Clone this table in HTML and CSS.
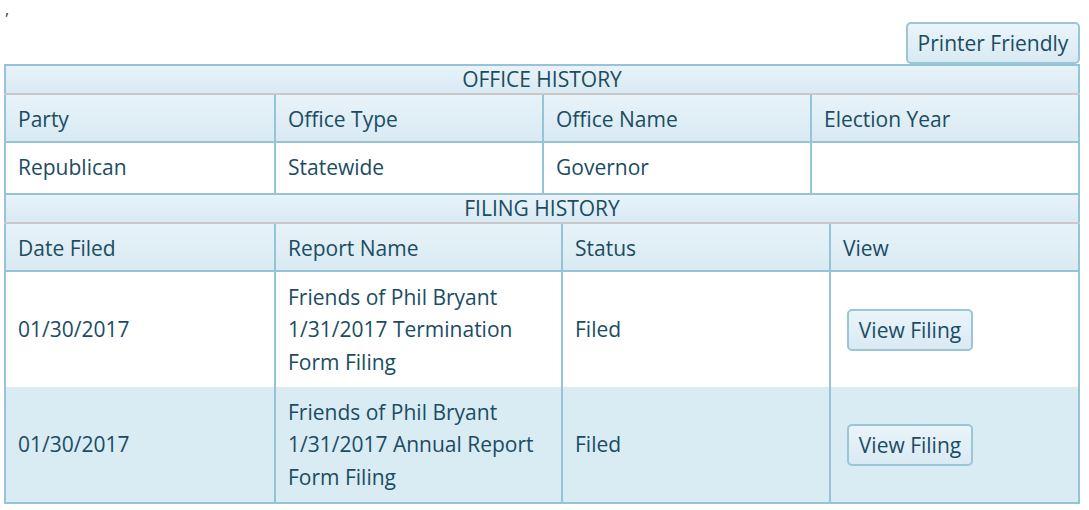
FILE: index.html
```html
<!DOCTYPE html>
<html>
<head>
<meta charset="utf-8">
<link rel="stylesheet" href="styles.css">
</head>
<body>
<div class="page">
  <div class="comma">,</div>
  <div class="toolbar">
    <button class="btn btn-print">Printer Friendly</button>
  </div>
  <table class="grid office">
    <colgroup>
      <col class="c1"><col class="c2"><col class="c3"><col class="c4">
    </colgroup>
    <thead>
      <tr><th class="title" colspan="4">OFFICE HISTORY</th></tr>
      <tr class="head">
        <th>Party</th><th>Office Type</th><th>Office Name</th><th>Election Year</th>
      </tr>
    </thead>
    <tbody>
      <tr class="row">
        <td>Republican</td><td>Statewide</td><td>Governor</td><td></td>
      </tr>
    </tbody>
  </table>
  <table class="grid filing">
    <colgroup>
      <col class="f1"><col class="f2"><col class="f3"><col class="f4">
    </colgroup>
    <thead>
      <tr><th class="title" colspan="4">FILING HISTORY</th></tr>
      <tr class="head">
        <th>Date Filed</th><th>Report Name</th><th>Status</th><th>View</th>
      </tr>
    </thead>
    <tbody>
      <tr class="row tall">
        <td>01/30/2017</td>
        <td>Friends of Phil Bryant<br>1/31/2017 Termination<br>Form Filing</td>
        <td>Filed</td>
        <td><button class="btn btn-view">View Filing</button></td>
      </tr>
      <tr class="row tall alt">
        <td>01/30/2017</td>
        <td>Friends of Phil Bryant<br>1/31/2017 Annual Report<br>Form Filing</td>
        <td>Filed</td>
        <td><button class="btn btn-view">View Filing</button></td>
      </tr>
    </tbody>
  </table>
</div>
</body>
</html>
```
FILE: styles.css
```css
html, body {
  margin: 0;
  padding: 0;
  background: #ffffff;
}

body {
  font-family: "Open Sans", "DejaVu Sans", sans-serif;
  color: #1b4c63;
}

.page {
  padding: 0 9px 0 4px;
}

.comma {
  font-size: 16px;
  line-height: 18px;
  height: 20px;
  padding-left: 1px;
}

.toolbar {
  display: flex;
  justify-content: flex-end;
  margin-top: 2px;
}

.btn {
  font-family: "Open Sans", "DejaVu Sans", sans-serif;
  color: #1b4c63;
  font-size: 21px;
  line-height: 28px;
  background: linear-gradient(#eaf4fa, #d9eaf3);
  border: 2px solid #9cc5d7;
  border-radius: 5px;
  padding: 4px 8px;
  margin: 0;
  cursor: pointer;
  white-space: nowrap;
}

.btn-print {
  width: 174px;
  height: 42px;
}

.btn-view {
  width: 126px;
  height: 42px;
  margin-left: 4px;
}

.grid {
  width: 100%;
  border-collapse: collapse;
  table-layout: fixed;
  font-size: 21px;
  border: 2px solid #94c4d6;
}

.filing {
  border-top: none;
}

.grid th,
.grid td {
  text-align: left;
  font-weight: normal;
  padding: 0 12px;
  vertical-align: middle;
}

.grid .title {
  text-align: center;
  height: 27px;
  line-height: 27px;
  padding: 0;
  background: linear-gradient(#e8f3f9, #d9eaf3);
  border-bottom: 2px solid #c9c9c9;
}

.head th {
  height: 44px;
  padding-top: 2px;
  line-height: 28px;
  background: linear-gradient(#e8f3f9, #d9eaf3);
  border-left: 2px solid #94c4d6;
  border-bottom: 2px solid #94c4d6;
}

.row td {
  height: 48px;
  line-height: 28px;
  border-left: 2px solid #94c4d6;
  background: #ffffff;
}

.office .row td {
  padding-bottom: 2px;
  border-bottom: 2px solid #94c4d6;
}

.row.tall td {
  height: 115px;
  line-height: 32.5px;
  padding-top: 0;
  padding-bottom: 0;
}

.row.alt td {
  background: #d9ebf3;
}

.c1 { width: 270px; }
.c2 { width: 268px; }
.c3 { width: 268px; }
.c4 { width: auto; }

.f1 { width: 270px; }
.f2 { width: 287px; }
.f3 { width: 268px; }
.f4 { width: auto; }
```
